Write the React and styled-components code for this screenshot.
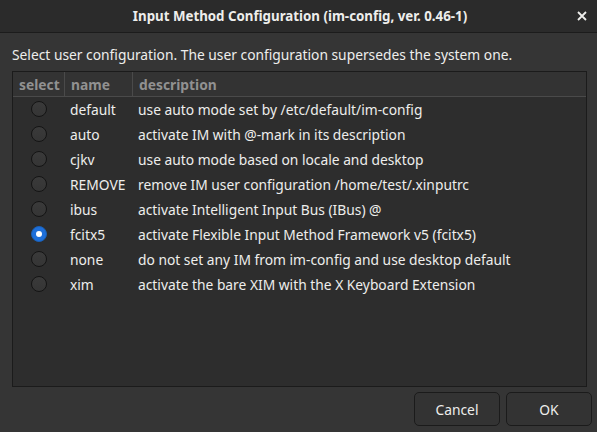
import React, { useState } from "react";
import styled, { createGlobalStyle } from "styled-components";

const GlobalStyle = createGlobalStyle`
	html, body {
		margin: 0;
		padding: 0;
		background: #353535;
	}
	* {
		box-sizing: border-box;
	}
`;

const Dialog = styled.div`
	width: 597px;
	height: 432px;
	display: flex;
	flex-direction: column;
	background: #353535;
	color: #eeeeec;
	font-family: "Noto Sans", "DejaVu Sans", sans-serif;
	font-size: 13.8px;
`;

const TitleBar = styled.div`
	height: 33px;
	flex: none;
	display: flex;
	align-items: center;
	justify-content: center;
	position: relative;
	background: #2b2b2b;
	border-bottom: 1px solid #1c1c1c;
	font-weight: bold;
	font-size: 13.3px;
	padding-left: 3px;
`;

const CloseButton = styled.span`
	position: absolute;
	right: 6px;
	top: 7px;
	width: 18px;
	height: 18px;
	display: flex;
	align-items: center;
	justify-content: center;
`;

const Body = styled.div`
	flex: 1;
	display: flex;
	flex-direction: column;
	padding: 10px 10px 6px 12px;
`;

const Prompt = styled.div`
	height: 28px;
	line-height: 24px;
	flex: none;
`;

const Table = styled.div`
	flex: 1;
	background: #2d2d2d;
	border: 1px solid #1b1b1b;
	display: flex;
	flex-direction: column;
`;

const Row = styled.div`
	display: grid;
	grid-template-columns: 52px 68px 1fr;
	height: 25px;
	align-items: center;
	${(p) =>
		p.$header &&
		`
		background: #333333;
		border-bottom: 1px solid #4a4a4a;
		color: #919191;
		font-weight: bold;
	`}
`;

const HeadCell = styled.div`
	height: 100%;
	display: flex;
	align-items: center;
	padding-left: 6px;
	border-right: ${(p) => (p.$last ? "none" : "1px solid #4a4a4a")};
`;

const Cell = styled.div`
	padding-left: 5px;
	white-space: nowrap;
`;

const RadioCell = styled.div`
	display: flex;
	justify-content: center;
	padding-bottom: 2px;
`;

const Radio = styled.span`
	width: 16px;
	height: 16px;
	border-radius: 50%;
	display: flex;
	align-items: center;
	justify-content: center;
	background: ${(p) => (p.$on ? "#1e6fd9" : "linear-gradient(#3a3a3a, #353535)")};
	border: 1px solid ${(p) => (p.$on ? "#1a5fb4" : "#141414")};
	&::after {
		content: "";
		width: 6px;
		height: 6px;
		border-radius: 50%;
		background: #ffffff;
		display: ${(p) => (p.$on ? "block" : "none")};
	}
`;

const Footer = styled.div`
	flex: none;
	display: flex;
	justify-content: flex-end;
	gap: 6px;
	padding-top: 5px;
	margin-right: -5px;
`;

const Button = styled.button`
	width: ${(p) => p.$w}px;
	height: 34px;
	border-radius: 5px;
	border: 1px solid #1b1b1b;
	background: #333333;
	color: #eeeeec;
	font-family: inherit;
	font-size: 13.8px;
`;

const rows = [
	["default", "use auto mode set by /etc/default/im-config"],
	["auto", "activate IM with @-mark in its description"],
	["cjkv", "use auto mode based on locale and desktop"],
	["REMOVE", "remove IM user configuration /home/test/.xinputrc"],
	["ibus", "activate Intelligent Input Bus (IBus) @"],
	["fcitx5", "activate Flexible Input Method Framework v5 (fcitx5)"],
	["none", "do not set any IM from im-config and use desktop default"],
	["xim", "activate the bare XIM with the X Keyboard Extension"],
];

const App = () => {
	const [selected, setSelected] = useState("fcitx5");

	return (
		<>
			<GlobalStyle />
			<Dialog>
				<TitleBar>
					Input Method Configuration (im-config, ver. 0.46-1)
					<CloseButton>
						<svg width="10" height="10" viewBox="0 0 10 10">
							<path d="M1 1 L9 9 M9 1 L1 9" stroke="#eeeeec" strokeWidth="1.8" />
						</svg>
					</CloseButton>
				</TitleBar>
				<Body>
					<Prompt>Select user configuration. The user configuration supersedes the system one.</Prompt>
					<Table>
						<Row $header>
							<HeadCell>select</HeadCell>
							<HeadCell>name</HeadCell>
							<HeadCell $last>description</HeadCell>
						</Row>
						{rows.map(([name, desc]) => (
							<Row key={name} onClick={() => setSelected(name)}>
								<RadioCell>
									<Radio $on={selected === name} />
								</RadioCell>
								<Cell>{name}</Cell>
								<Cell>{desc}</Cell>
							</Row>
						))}
					</Table>
					<Footer>
						<Button $w={86}>Cancel</Button>
						<Button $w={86}>OK</Button>
					</Footer>
				</Body>
			</Dialog>
		</>
	);
};

export default App;
